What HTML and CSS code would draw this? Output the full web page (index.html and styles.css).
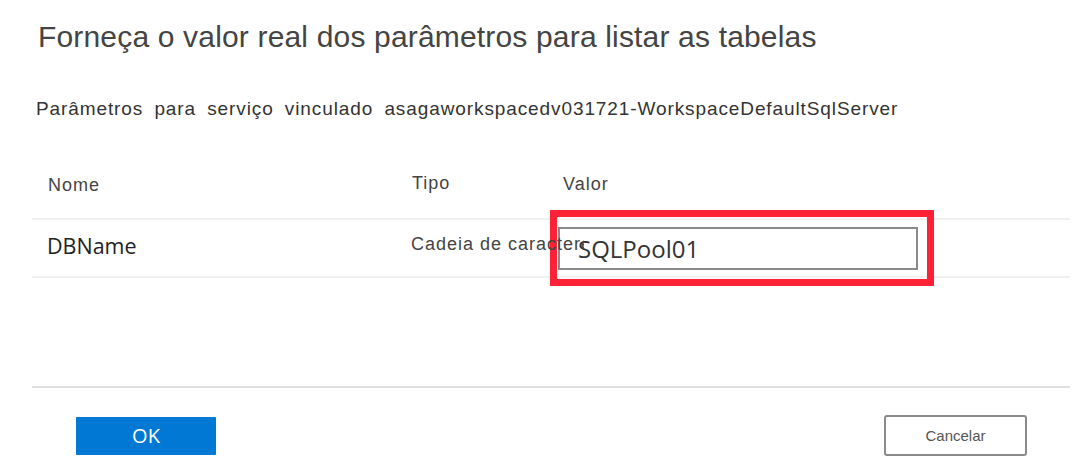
FILE: index.html
```html
<!DOCTYPE html>
<html lang="pt">
<head>
<meta charset="utf-8">
<link rel="stylesheet" href="styles.css">
</head>
<body>
<div class="dialog">
  <h1 class="title">Forneça o valor real dos parâmetros para listar as tabelas</h1>
  <p class="subtitle">Parâmetros para serviço vinculado asagaworkspacedv031721-WorkspaceDefaultSqlServer</p>
  <div class="table">
    <div class="thead">
      <div class="th th-name">Nome</div>
      <div class="th th-type">Tipo</div>
      <div class="th th-value">Valor</div>
    </div>
    <div class="row">
      <div class="cell cell-name">DBName</div>
      <div class="cell cell-type">Cadeia de caracteres</div>
      <div class="cell cell-value">
        <div class="field">
          <input class="input" type="text" value="SQLPool01">
          <span class="highlight"></span>
        </div>
      </div>
    </div>
  </div>
  <div class="footer">
    <button class="btn btn-primary">OK</button>
    <button class="btn btn-default">Cancelar</button>
  </div>
</div>
</body>
</html>
```

FILE: styles.css
```css
html, body {
  margin: 0;
  padding: 0;
  background: #ffffff;
}

.dialog {
  width: 1078px;
  height: 476px;
  box-sizing: border-box;
  padding: 0 8px 0 32px;
  font-family: "Open Sans", "Noto Sans", sans-serif;
}

.title {
  margin: 0;
  padding: 20px 0 0 6px;
  font-family: "Liberation Sans", Arial, sans-serif;
  font-weight: normal;
  font-size: 30px;
  line-height: 34px;
  letter-spacing: 0.17px;
  color: #444444;
}

.subtitle {
  margin: 0;
  padding: 44px 0 0 4px;
  font-family: "Liberation Sans", Arial, sans-serif;
  font-size: 19px;
  line-height: 22px;
  color: #333333;
  letter-spacing: 0.9px;
  word-spacing: 5px;
}

.table {
  margin-top: 40px;
}

.thead,
.row {
  display: grid;
  grid-template-columns: 364px 151px 1fr;
}

.thead {
  height: 58px;
  border-bottom: 2px solid #f0f0f0;
}

.th {
  padding-left: 16px;
  font-family: "Liberation Sans", Arial, sans-serif;
  font-size: 18px;
  letter-spacing: 1px;
  color: #444444;
  display: flex;
  align-items: center;
}

.th-name { padding-bottom: 8px; }
.th-type { padding-bottom: 12px; }
.th-value { padding-bottom: 10px; }

.row {
  height: 56px;
  border-bottom: 2px solid #f0f0f0;
  align-items: center;
}

.cell-name {
  padding-left: 15px;
  padding-bottom: 6px;
  font-size: 21.5px;
  color: #222222;
}

.cell-type {
  padding-left: 15px;
  padding-bottom: 8px;
  margin-right: -37px;
  font-family: "Liberation Sans", Arial, sans-serif;
  font-size: 18px;
  letter-spacing: 1px;
  color: #444444;
  white-space: nowrap;
  overflow: hidden;
  position: relative;
  z-index: 1;
}

.cell-value {
  padding-left: 11px;
}

.field {
  position: relative;
  width: 360px;
  height: 43px;
}

.input {
  box-sizing: border-box;
  width: 360px;
  height: 43px;
  margin: 0;
  border: 2px solid #8a8a8a;
  background: transparent;
  padding: 0 0 0 18px;
  font-family: "Open Sans", "Noto Sans", sans-serif;
  font-size: 24px;
  color: #333333;
  outline: none;
}

.highlight {
  position: absolute;
  left: -8px;
  top: -17px;
  width: 384px;
  height: 76px;
  box-sizing: border-box;
  border: 7px solid #ff2236;
  pointer-events: none;
}

.footer {
  margin-top: 108px;
  border-top: 2px solid #e0e0e0;
  padding: 27px 43px 0 44px;
  display: flex;
  justify-content: space-between;
  align-items: center;
}

.btn {
  box-sizing: border-box;
  font-family: "Open Sans", "Noto Sans", sans-serif;
  margin: 0;
  cursor: pointer;
}

.btn-primary {
  width: 140px;
  height: 38px;
  background: #0078d4;
  border: none;
  border-radius: 1px;
  color: #ffffff;
  font-size: 20px;
}

.btn-default {
  width: 143px;
  height: 41px;
  background: #ffffff;
  border: 2px solid #8a8a8a;
  border-radius: 3px;
  color: #555555;
  font-size: 15px;
  font-family: "Liberation Sans", Arial, sans-serif;
}
```
